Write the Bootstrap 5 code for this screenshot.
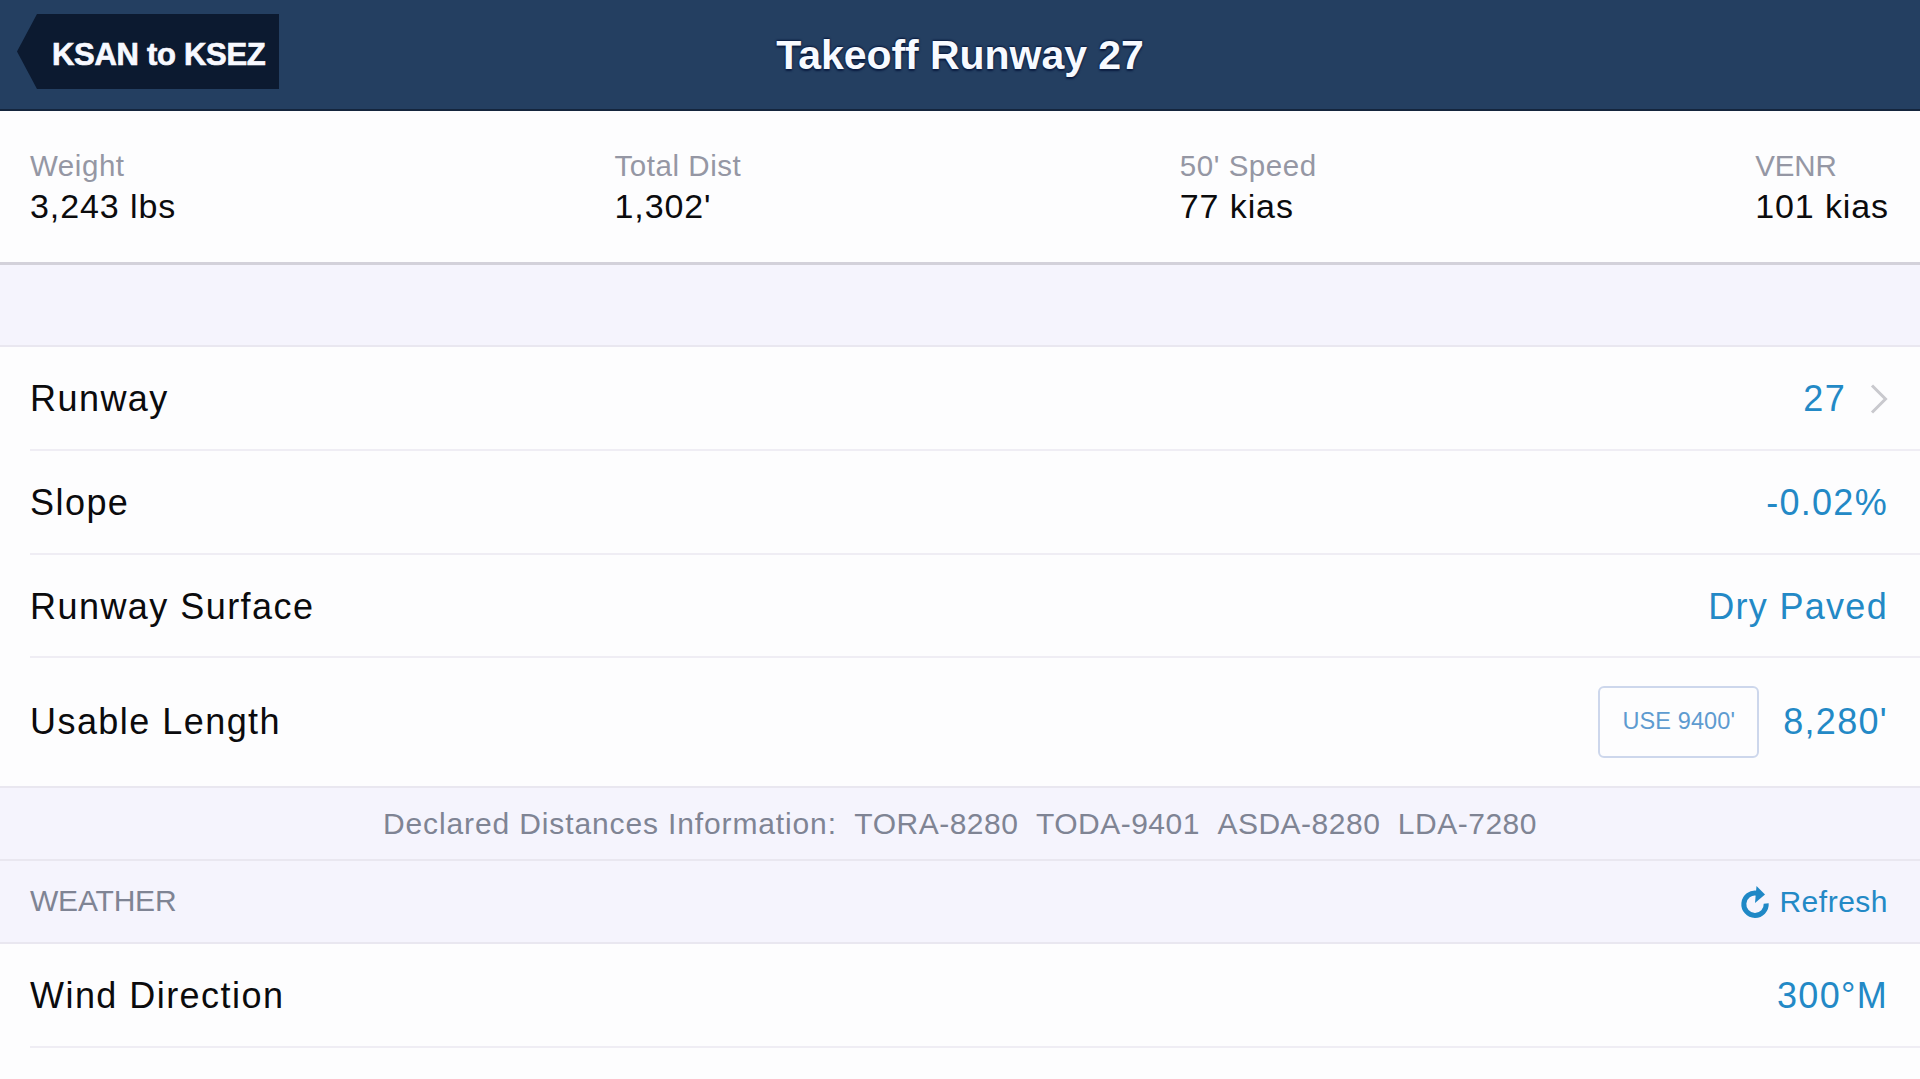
<!DOCTYPE html>
<html lang="en">
<head>
    <meta charset="UTF-8">
    <title>Takeoff Runway 27</title>
    <meta name="viewport" content="width=device-width, initial-scale=1">
    <link href="https://cdn.jsdelivr.net/npm/bootstrap@5.3.3/dist/css/bootstrap.min.css" rel="stylesheet">
    <style>
        body {
            font-family: "Liberation Sans", Arial, sans-serif;
            background: #fdfdfe;
            color: #0b0b0d;
            overflow: hidden;
        }
        .top-bar {
            height: 111px;
            background: #243f61;
            border-bottom: 2px solid #14253d;
        }
        .top-bar h1 {
            font-size: 41px;
            line-height: 48px;
            color: #f7faff;
            letter-spacing: -.05px;
            text-shadow: 0 -1px 2px #06173c, 0 2px 2px #0a1c40;
        }
        /* back button with a pointed left edge */
        .back-btn {
            left: 17px;
            top: 14px;
            width: 262px;
            height: 75px;
            padding: 8px 0 0 35px;
            background: #0c1a30;
            clip-path: polygon(0 50%, 20px 0, 100% 0, 100% 100%, 20px 100%);
            font-size: 31px;
            letter-spacing: -.3px;
            color: #f8f9ff;
            -webkit-text-stroke: .7px #f8f9ff;
        }
        .stats {
            height: 154px;
            padding: 35px 31px 0 30px;
            border-bottom: 3px solid #d3d1da;
            line-height: 40px;
        }
        .stats dt {
            font-size: 29.5px;
            font-weight: 400;
            color: #9597a4;
            letter-spacing: .55px;
        }
        .stats dl:last-child dt { letter-spacing: -.1px; }
        .stats dd {
            font-size: 34px;
            letter-spacing: .9px;
        }
        .band {
            background: #f5f4fd;
            border-bottom: 2px solid #e9e7f0;
            font-size: 30px;
            color: #7f8494;
        }
        .band-gap { height: 82px; }
        .band-info { height: 73px; gap: 17.5px; letter-spacing: .5px; padding-bottom: 1px; }
        .band-info .info-label { letter-spacing: .87px; }
        .band-head { height: 83px; padding: 0 32px 0 30px; }
        .band-head .head-label { letter-spacing: -.2px; padding-bottom: 2px; }
        .band-head .val { letter-spacing: .5px; }
        .setting {
            height: 104px;
            margin-left: 30px;
            padding: 2px 32px 0 0;
            border-bottom: 2px solid #efedf4;
            font-size: 36px;
            letter-spacing: 1.45px;
        }
        .setting .val { letter-spacing: 1.3px; }
        .setting-short { height: 103px; }
        .setting-tall {
            height: 130px;
            margin-left: 0;
            padding: 0 32px 0 30px;
            border-color: #e9e7f0;
        }
        .val { color: #2389c6; }
        .use-btn {
            width: 161px;
            height: 72px;
            border: 2px solid #cdd7ec;
            border-radius: 6px;
            background: none;
            color: #5e9bd0;
            font-size: 23.5px;
            letter-spacing: .1px;
        }
    </style>
</head>
<body>
<header class="top-bar position-relative d-flex align-items-center justify-content-center">
    <a href="#" class="back-btn position-absolute d-flex align-items-center fw-bold text-decoration-none text-nowrap">KSAN to KSEZ</a>
    <h1 class="fw-bold mb-0">Takeoff Runway 27</h1>
</header>

<section class="stats d-flex justify-content-between">
    <dl class="mb-0"><dt>Weight</dt><dd class="mb-0">3,243 lbs</dd></dl>
    <dl class="mb-0"><dt>Total Dist</dt><dd class="mb-0">1,302'</dd></dl>
    <dl class="mb-0"><dt>50' Speed</dt><dd class="mb-0">77 kias</dd></dl>
    <dl class="mb-0"><dt>VENR</dt><dd class="mb-0">101 kias</dd></dl>
</section>

<div class="band band-gap"></div>

<main>
    <div class="setting d-flex align-items-center justify-content-between">
        <span>Runway</span>
        <span class="val d-flex align-items-center">27
            <svg class="ms-4" width="18" height="30" viewBox="0 0 18 30" fill="none" stroke="#c9c9ce" stroke-width="3"><path d="M2 1.5 15.5 15 2 28.5"/></svg>
        </span>
    </div>
    <div class="setting d-flex align-items-center justify-content-between">
        <span>Slope</span>
        <span class="val">-0.02%</span>
    </div>
    <div class="setting setting-short d-flex align-items-center justify-content-between">
        <span>Runway Surface</span>
        <span class="val">Dry Paved</span>
    </div>
    <div class="setting setting-tall d-flex align-items-center justify-content-between">
        <span>Usable Length</span>
        <span class="d-flex align-items-center gap-4">
            <button type="button" class="use-btn">USE 9400'</button>
            <span class="val">8,280'</span>
        </span>
    </div>

    <div class="band band-info d-flex align-items-center justify-content-center">
        <span class="info-label">Declared Distances Information:</span>
        <span>TORA-8280</span>
        <span>TODA-9401</span>
        <span>ASDA-8280</span>
        <span>LDA-7280</span>
    </div>
    <div class="band band-head d-flex align-items-center justify-content-between">
        <span class="head-label">WEATHER</span>
        <a href="#" class="val d-flex align-items-center text-decoration-none">
            <svg class="me-2" width="32" height="34" viewBox="0 0 32 34"><path d="M18 8.2A11.2 11.2 0 1 0 27.2 18.5" fill="none" stroke="#1f88c6" stroke-width="5"/><path d="M17.5 1 26 9.5 16 18z" fill="#1f88c6"/></svg>
            Refresh
        </a>
    </div>

    <div class="setting d-flex align-items-center justify-content-between">
        <span>Wind Direction</span>
        <span class="val">300°M</span>
    </div>
</main>

<script src="https://cdn.jsdelivr.net/npm/bootstrap@5.3.3/dist/js/bootstrap.bundle.min.js"></script>
</body>
</html>
